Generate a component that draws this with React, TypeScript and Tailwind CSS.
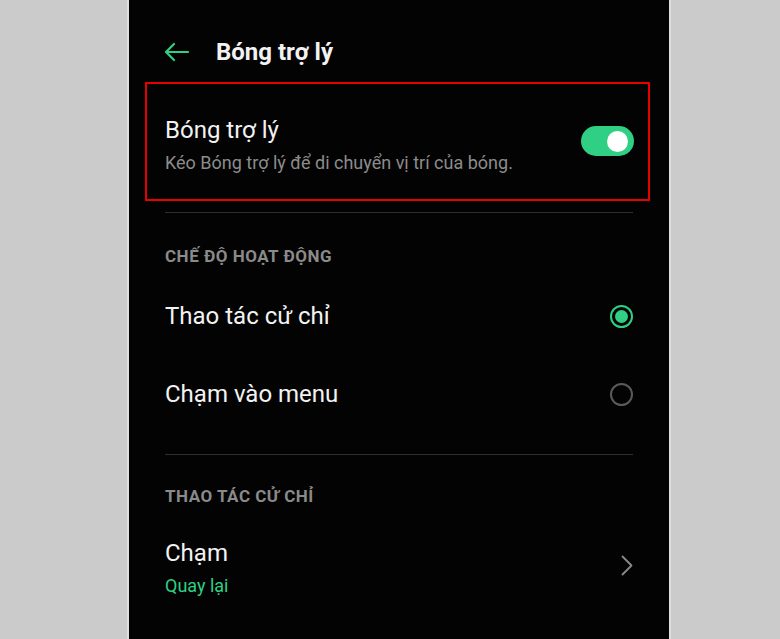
import React from "react";

const font = { fontFamily: "Roboto, 'Noto Sans', 'Liberation Sans', sans-serif" };

function Radio({ checked }: { checked: boolean }) {
  return checked ? (
    <div className="w-[23px] h-[23px] rounded-full border-2 border-[#2fd083] flex items-center justify-center">
      <div className="w-[13px] h-[13px] rounded-full bg-[#2fd083]" />
    </div>
  ) : (
    <div className="w-[23px] h-[23px] rounded-full border-2 border-[#5a5a5a]" />
  );
}

export default function App() {
  return (
    <div className="w-[780px] h-[639px] bg-[#cbcbcb] flex overflow-hidden" style={font}>
      <div className="w-[127px] shrink-0" />
      <div className="w-[2px] bg-[#dedede] shrink-0" />
      <div className="w-[540px] shrink-0 bg-[#030303] flex flex-col px-[36px]">
        {/* header */}
        <div className="h-[82px] pt-[22px]">
          <div className="h-[60px] flex items-center">
            <svg width="26" height="20" viewBox="0 0 26 20" className="-ml-[2px]">
              <path d="M11 2 L3 10 L11 18 M3 10 H25" fill="none" stroke="#2fd083" strokeWidth="2.2" strokeLinecap="round" strokeLinejoin="round" />
            </svg>
            <span className="ml-[27px] text-[24px] font-bold text-[#f2f2f2] leading-[28px]">Bóng trợ lý</span>
          </div>
        </div>
        {/* highlighted row */}
        <div className="-ml-[20px] w-[505px] h-[119px] border-2 border-[#e80000] flex items-start justify-between pl-[18px] pr-[14px]">
          <div className="pt-[32px] flex flex-col">
            <span className="text-[24px] leading-[28px] text-[#f2f2f2]">Bóng trợ lý</span>
            <span className="mt-[9px] text-[18px] leading-[20px] text-[#8c8c8c]">Kéo Bóng trợ lý để di chuyển vị trí của bóng.</span>
          </div>
          <div className="mt-[42px] w-[53px] h-[30px] rounded-full bg-[#2fd083] flex items-center justify-end pr-[6px]">
            <div className="w-[21px] h-[21px] rounded-full bg-white" />
          </div>
        </div>
        <div className="mt-[11px] h-px bg-[#2e2e2e]" />
        {/* section 1 */}
        <div className="pt-[33px] pb-[11px] text-[17px] tracking-[0.5px] leading-[20px] font-bold text-[#8a8a8a]">CHẾ ĐỘ HOẠT ĐỘNG</div>
        <div className="h-[78px] flex items-center justify-between">
          <span className="text-[24px] leading-[28px] text-[#f2f2f2]">Thao tác cử chỉ</span>
          <Radio checked />
        </div>
        <div className="h-[78px] flex items-center justify-between">
          <span className="text-[24px] leading-[28px] text-[#f2f2f2]">Chạm vào menu</span>
          <Radio checked={false} />
        </div>
        <div className="mt-[21px] h-px bg-[#2e2e2e]" />
        {/* section 2 */}
        <div className="pt-[31px] text-[17px] tracking-[0.5px] leading-[20px] font-bold text-[#8a8a8a]">THAO TÁC CỬ CHỈ</div>
        <div className="mt-[33px] flex items-center justify-between">
          <div className="flex flex-col">
            <span className="text-[24px] leading-[28px] text-[#f2f2f2]">Chạm</span>
            <span className="mt-[9px] text-[18px] leading-[20px] text-[#2fd083]">Quay lại</span>
          </div>
          <svg width="12" height="21" viewBox="0 0 12 21" className="mt-[-4px]">
            <path d="M1.5 1.5 L10.5 10.5 L1.5 19.5" fill="none" stroke="#8a8a8a" strokeWidth="1.8" strokeLinecap="round" strokeLinejoin="round" />
          </svg>
        </div>
      </div>
      <div className="w-[2px] bg-[#dedede] shrink-0" />
      <div className="flex-1" />
    </div>
  );
}
